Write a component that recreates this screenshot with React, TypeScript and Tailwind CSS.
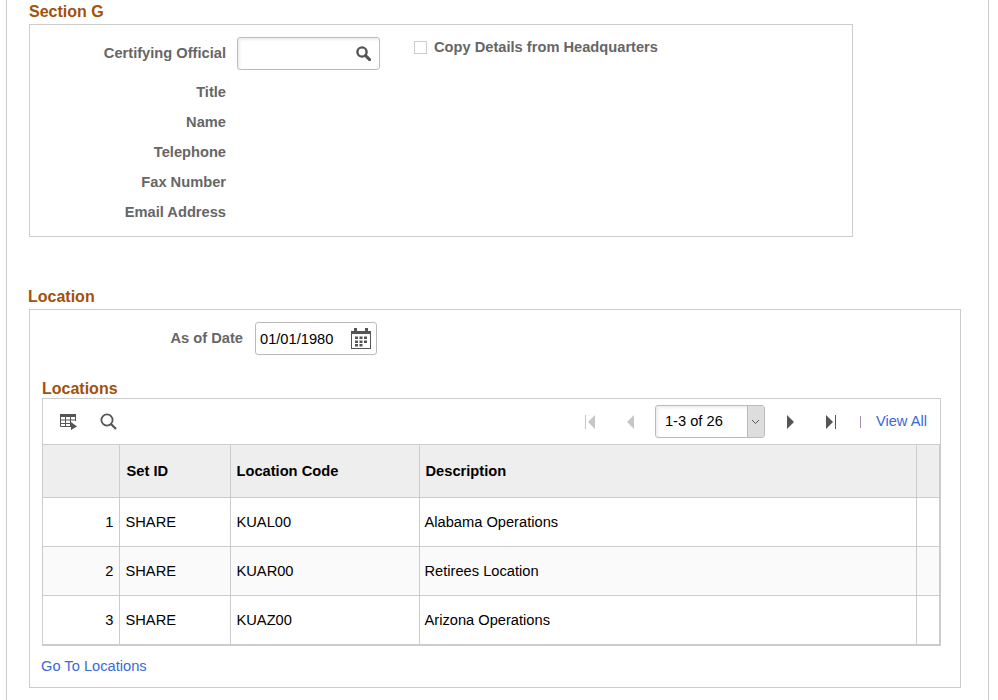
const officialFields = ["Title", "Name", "Telephone", "Fax Number", "Email Address"];

const rows = [
  { id: 1, setId: "SHARE", code: "KUAL00", description: "Alabama Operations" },
  { id: 2, setId: "SHARE", code: "KUAR00", description: "Retirees Location" },
  { id: 3, setId: "SHARE", code: "KUAZ00", description: "Arizona Operations" },
];

function CalendarIcon() {
  return (
    <svg width="20" height="21" viewBox="0 0 20 21" className="block">
      <path d="M0 3h3V0h3v3h8V0h3v3h3v18H0z" fill="#555" />
      <rect x="1" y="6" width="18" height="14" fill="#fff" />
      {[8.5, 12.5, 16].map((y) =>
        [4, 8.5, 13].map((x) => (y === 16 && x === 13 ? null : <rect key={`${x}-${y}`} x={x} y={y} width="3" height="2.5" fill="#555" />)),
      )}
    </svg>
  );
}

function GridIcon() {
  return (
    <svg width="17" height="16" viewBox="0 0 17 16" className="block">
      <path d="M0 0h16v3H0z" fill="#555" />
      <path d="M.5 3v9.5h11M15.5 3v4M5.5 3v9.5M10.5 3v9.5M.5 6h15M.5 9.5h11" fill="none" stroke="#555" />
      <path d="M11 8l6 4.5-6 3.5z" fill="#555" />
    </svg>
  );
}

function LookupIcon() {
  return (
    <svg width="15" height="15" viewBox="0 0 15 15" className="block">
      <circle cx="6" cy="6" r="4.6" fill="none" stroke="#555" strokeWidth="2.4" />
      <path d="M9.6 9.6l4 4" fill="none" stroke="#555" strokeWidth="3" strokeLinecap="round" />
    </svg>
  );
}

function FindIcon() {
  return (
    <svg width="17" height="17" viewBox="0 0 17 17" className="block">
      <circle cx="7" cy="7" r="5.6" fill="none" stroke="#555" strokeWidth="1.8" />
      <path d="M11 11l5 5" fill="none" stroke="#555" strokeWidth="2.2" />
    </svg>
  );
}

function PageArrow({ dir, end, on }: { dir: "left" | "right"; end?: boolean; on?: boolean }) {
  const color = on ? "#555" : "#c6c6c6";
  return (
    <svg width="12" height="14" viewBox="0 0 12 14" className="block">
      {dir === "left" ? <path d="M10 0v14L3 7z" fill={color} /> : <path d="M1 0v14l7-7z" fill={color} />}
      {end ? <rect x={dir === "left" ? 0 : 10} y="0" width="1" height="14" fill={color} /> : null}
    </svg>
  );
}

export default function App() {
  return (
    <div className="h-[700px] overflow-hidden bg-white font-['Liberation_Sans',Arial,sans-serif] text-[14.67px] text-black">
      <div className="ml-[6px] h-full w-[983px] border-x border-[#ccc] pl-[22px]">
        <h2 className="h-[24px] pt-[4px] text-[16px] leading-[16px] font-bold text-[#a3500b]">Section G</h2>

        <section className="flex h-[213px] w-[824px] border border-[#ccc]">
          <div className="w-[207px] pt-[12px]">
            <div className="flex h-[31px] w-[196px] items-center justify-end font-bold text-[#666]">Certifying Official</div>
            <div className="pt-[9px]">
              {officialFields.map((label) => (
                <div className="flex h-[30px] w-[196px] items-center justify-end font-bold text-[#666]" key={label}>
                  {label}
                </div>
              ))}
            </div>
          </div>
          <div className="pt-[12px]">
            <div className="flex h-[33px] w-[143px] items-center justify-end rounded-[3px] border border-[#bbb] bg-white pr-[8px] shadow-[inset_2px_2px_3px_rgba(0,0,0,0.07)]">
              <LookupIcon />
            </div>
          </div>
          <div className="flex items-start pt-[14px] pl-[34px]">
            <span className="mt-[2px] h-[13px] w-[13px] border border-[#ccc] bg-white" />
            <span className="ml-[7px] leading-[16px] font-bold text-[#666]">Copy Details from Headquarters</span>
          </div>
        </section>

        <h2 className="mt-[52px] ml-[-1px] h-[20px] text-[16px] leading-[16px] font-bold text-[#a3500b]">Location</h2>

        <section className="h-[379px] w-[932px] border border-[#ccc] px-[12px]">
          <div className="mt-[12px] flex h-[33px] items-center">
            <span className="w-[201px] pb-[2px] text-right font-bold text-[#666]">As of Date</span>
            <div className="ml-[12px] flex h-[33px] w-[122px] items-center justify-between rounded-[3px] border border-[#bbb] bg-white pr-[5px] pl-[4px]">
              <span>01/01/1980</span>
              <CalendarIcon />
            </div>
          </div>

          <h3 className="mt-[26px] h-[17px] text-[16px] leading-[16px] font-bold text-[#a3500b]">Locations</h3>

          <div className="w-[899px] border border-[#ccc] pr-px">
            <div className="flex h-[45px] items-center">
              <div className="ml-[17px]">
                <GridIcon />
              </div>
              <div className="ml-[23px]">
                <FindIcon />
              </div>
              <div className="ml-auto flex items-center">
                <PageArrow dir="left" end />
                <div className="ml-[27px]">
                  <PageArrow dir="left" />
                </div>
                <div className="ml-[19px] flex h-[33px] w-[110px] items-stretch overflow-hidden rounded-[3px] border border-[#bbb] shadow-[inset_2px_2px_3px_rgba(0,0,0,0.07)]">
                  <span className="flex-1 pl-[9px] leading-[31px]">1-3 of 26</span>
                  <span className="flex w-[17px] items-center justify-center border-l border-[#bbb] bg-[#ddd]">
                    <svg width="9" height="6" viewBox="0 0 9 6"><path d="M1 1l3.5 3.5L8 1" fill="none" stroke="#555" /></svg>
                  </span>
                </div>
                <div className="ml-[21px]">
                  <PageArrow dir="right" on />
                </div>
                <div className="ml-[27px]">
                  <PageArrow dir="right" end on />
                </div>
                <span className="ml-[23px] h-[12px] w-px bg-[#a78bb0]" />
                <a className="mr-[12px] mb-[2px] ml-[15px] text-[#3a69d8]">View All</a>
              </div>
            </div>

            <table className="w-[896px] table-fixed border-collapse">
              <colgroup>
                <col className="w-[76px]" />
                <col className="w-[111px]" />
                <col className="w-[189px]" />
                <col className="w-[497px]" />
                <col className="w-[23px]" />
              </colgroup>
              <thead>
                <tr className="h-[53px] border-y border-[#ccc] bg-[#eee] text-left">
                  <th className="border-r border-[#ccc]" />
                  <th className="border-r border-[#ccc] pl-[7px] font-bold">Set ID</th>
                  <th className="border-r border-[#ccc] pl-[6px] font-bold">Location Code</th>
                  <th className="border-r border-[#ccc] pl-[6px] font-bold">Description</th>
                  <th className="border-r border-[#ccc]" />
                </tr>
              </thead>
              <tbody>
                {rows.map((row) => (
                  <tr className="h-[49px] border-b border-[#ccc] even:bg-[#fafafa]" key={row.id}>
                    <td className="border-r border-[#ccc] pr-[5px] text-right">{row.id}</td>
                    <td className="border-r border-[#ccc] pl-[6px]">{row.setId}</td>
                    <td className="border-r border-[#ccc] pl-[6px]">{row.code}</td>
                    <td className="border-r border-[#ccc] pl-[5px]">{row.description}</td>
                    <td className="border-r border-[#ccc]" />
                  </tr>
                ))}
              </tbody>
            </table>
          </div>

          <a className="mt-[12px] ml-[-1px] block leading-[17px] text-[#3a69d8]">Go To Locations</a>
        </section>
      </div>
    </div>
  );
}
